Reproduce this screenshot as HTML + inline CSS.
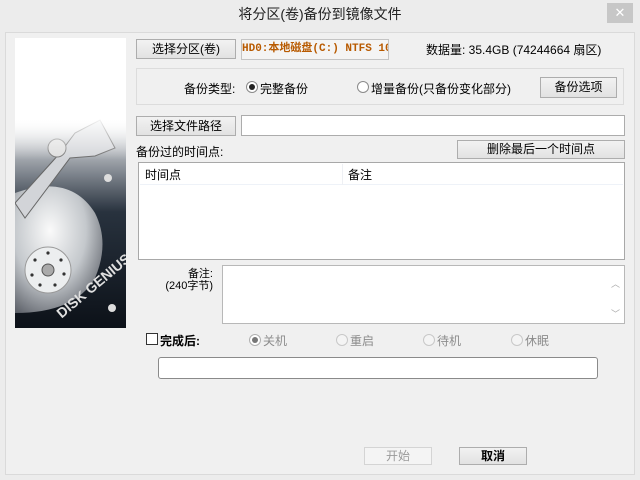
<!DOCTYPE html>
<html><head><meta charset="utf-8"><style>
*{box-sizing:border-box;margin:0;padding:0}
body{width:640px;height:480px;background:#ececec;font-family:"Liberation Sans","Noto Sans CJK SC",sans-serif;font-size:12px;color:#000;position:relative;overflow:hidden}
.a{position:absolute}
.btn{position:absolute;background:linear-gradient(#f2f2f2,#e2e2e2);border:1px solid #adadad;text-align:center;font-size:12px;line-height:18px}
.in{position:absolute;background:#fff;border:1px solid #acacac}
.rad{position:absolute;width:12px;height:12px;border:1px solid #8a8a8a;border-radius:50%;background:#fff}
.rad.dis{border-color:#c8c8c8;background:#f4f4f4}
.rad .d{position:absolute;left:2px;top:2px;width:6px;height:6px;border-radius:50%;background:#222}
.g{color:#8c8c8c}
</style></head><body>
<div class="a" style="left:0;top:0;width:640px;height:28px;text-align:center;font-size:14px;line-height:28px;color:#222">将分区(卷)备份到镜像文件</div>
<div class="a" style="left:607px;top:3px;width:26px;height:20px;background:#c7c7c7;color:#fff;text-align:center;line-height:20px;font-size:13px">✕</div>
<div class="a" style="left:5px;top:32px;width:630px;height:443px;background:#f0f0f0;border:1px solid #dadada"></div>

<svg class="a" style="left:15px;top:38px" width="111" height="290" viewBox="0 0 111 290">
<defs>
<linearGradient id="bg" x1="0" y1="0" x2="0" y2="1"><stop offset="0" stop-color="#fff"/><stop offset=".28" stop-color="#fff"/><stop offset=".45" stop-color="#8a9098"/><stop offset=".6" stop-color="#28323e"/><stop offset="1" stop-color="#0c1118"/></linearGradient>
<radialGradient id="pl" cx=".4" cy=".35" r=".75"><stop offset="0" stop-color="#fafafa"/><stop offset=".55" stop-color="#c4c8cc"/><stop offset="1" stop-color="#5c6068"/></radialGradient>
<linearGradient id="fd" x1="0" y1="0" x2="0" y2="1"><stop offset="0" stop-color="#fff" stop-opacity="1"/><stop offset=".27" stop-color="#fff" stop-opacity="1"/><stop offset=".42" stop-color="#fff" stop-opacity="0"/></linearGradient>
</defs>
<rect width="111" height="290" fill="url(#bg)"/>
<path d="M0 155 Q55 135 80 175 Q95 205 80 240 Q60 275 0 275Z" fill="url(#pl)"/>
<circle cx="33" cy="232" r="23" fill="#eceeef" stroke="#999"/>
<g fill="#333"><circle cx="33" cy="215" r="1.6"/><circle cx="46" cy="222" r="1.6"/><circle cx="49" cy="236" r="1.6"/><circle cx="40" cy="247" r="1.6"/><circle cx="25" cy="247" r="1.6"/><circle cx="17" cy="237" r="1.6"/><circle cx="20" cy="222" r="1.6"/></g>
<circle cx="33" cy="232" r="6" fill="#aaa" stroke="#555"/>
<path d="M0 165 L45 115 L60 95 L85 82 L100 110 L80 118 L55 120 L10 180Z" fill="#d2d4d8" stroke="#666"/>
<circle cx="42" cy="110" r="9" fill="#ddd" stroke="#777"/>
<circle cx="93" cy="140" r="4" fill="#ddd"/>
<circle cx="97" cy="270" r="4" fill="#ddd"/>
<text x="30" y="265" fill="#e0e0e0" font-size="14" font-weight="bold" font-family="Liberation Sans" transform="rotate(-40 60 250)">DISK GENIUS</text>
<rect width="111" height="290" fill="url(#fd)"/>
</svg>

<div class="btn" style="left:136px;top:39px;width:100px;height:20px">选择分区(卷)</div>
<div class="in" style="left:241px;top:39px;width:148px;height:21px;background:#f4f4f4;border-color:#c4c4c4;color:#b85a00;font-weight:bold;font-family:'Liberation Mono','Noto Sans CJK SC',monospace;font-size:11px;line-height:19px;white-space:nowrap;overflow:hidden">HD0:本地磁盘(C:) NTFS 10</div>
<div class="a" style="left:426px;top:41px;font-size:12px">数据量: 35.4GB (74244664 扇区)</div>

<div class="a" style="left:136px;top:68px;width:488px;height:37px;border:1px solid #dcdcdc"></div>
<div class="a" style="left:184px;top:80px">备份类型:</div>
<div class="rad" style="left:246px;top:81px"><div class="d"></div></div>
<div class="a" style="left:260px;top:80px">完整备份</div>
<div class="rad" style="left:357px;top:81px"></div>
<div class="a" style="left:371px;top:80px">增量备份(只备份变化部分)</div>
<div class="btn" style="left:540px;top:77px;width:77px;height:21px">备份选项</div>

<div class="btn" style="left:136px;top:116px;width:100px;height:20px">选择文件路径</div>
<div class="in" style="left:241px;top:115px;width:384px;height:21px"></div>
<div class="a" style="left:136px;top:143px">备份过的时间点:</div>
<div class="btn" style="left:457px;top:140px;width:168px;height:19px;line-height:17px">删除最后一个时间点</div>

<div class="in" style="left:138px;top:162px;width:487px;height:98px;border-color:#a8a8a8"></div>
<div class="a" style="left:140px;top:164px;width:483px;height:21px;border-bottom:1px solid #eef2f8"></div>
<div class="a" style="left:342px;top:164px;width:1px;height:21px;background:#eef0f4"></div>
<div class="a" style="left:145px;top:166px">时间点</div>
<div class="a" style="left:348px;top:166px">备注</div>

<div class="a" style="left:150px;top:268px;width:63px;text-align:right;line-height:12px;font-size:11px">备注:<br>(240字节)</div>
<div class="in" style="left:222px;top:265px;width:403px;height:59px;border-color:#b8b8b8"></div>
<div class="a" style="left:611px;top:277px;color:#aaa;font-size:9px">︿</div>
<div class="a" style="left:611px;top:307px;color:#aaa;font-size:9px">﹀</div>

<div class="a" style="left:146px;top:333px;width:12px;height:12px;border:1px solid #333;background:#fff"></div>
<div class="a" style="left:160px;top:332px;font-weight:bold">完成后:</div>
<div class="rad" style="left:249px;top:334px;border-color:#b0b0b0"><div class="d" style="background:#777"></div></div>
<div class="a g" style="left:263px;top:332px">关机</div>
<div class="rad dis" style="left:336px;top:334px"></div>
<div class="a g" style="left:350px;top:332px">重启</div>
<div class="rad dis" style="left:423px;top:334px"></div>
<div class="a g" style="left:437px;top:332px">待机</div>
<div class="rad dis" style="left:511px;top:334px"></div>
<div class="a g" style="left:525px;top:332px">休眠</div>

<div class="a" style="left:158px;top:357px;width:440px;height:22px;background:#fff;border:1px solid #8a8a8a;border-radius:3px"></div>

<div class="btn" style="left:364px;top:447px;width:68px;height:18px;line-height:16px;color:#9a9a9a;background:#f4f4f4;border-color:#d4d4d4">开始</div>
<div class="btn" style="left:459px;top:447px;width:68px;height:18px;line-height:16px;font-weight:bold">取消</div>
</body></html>
